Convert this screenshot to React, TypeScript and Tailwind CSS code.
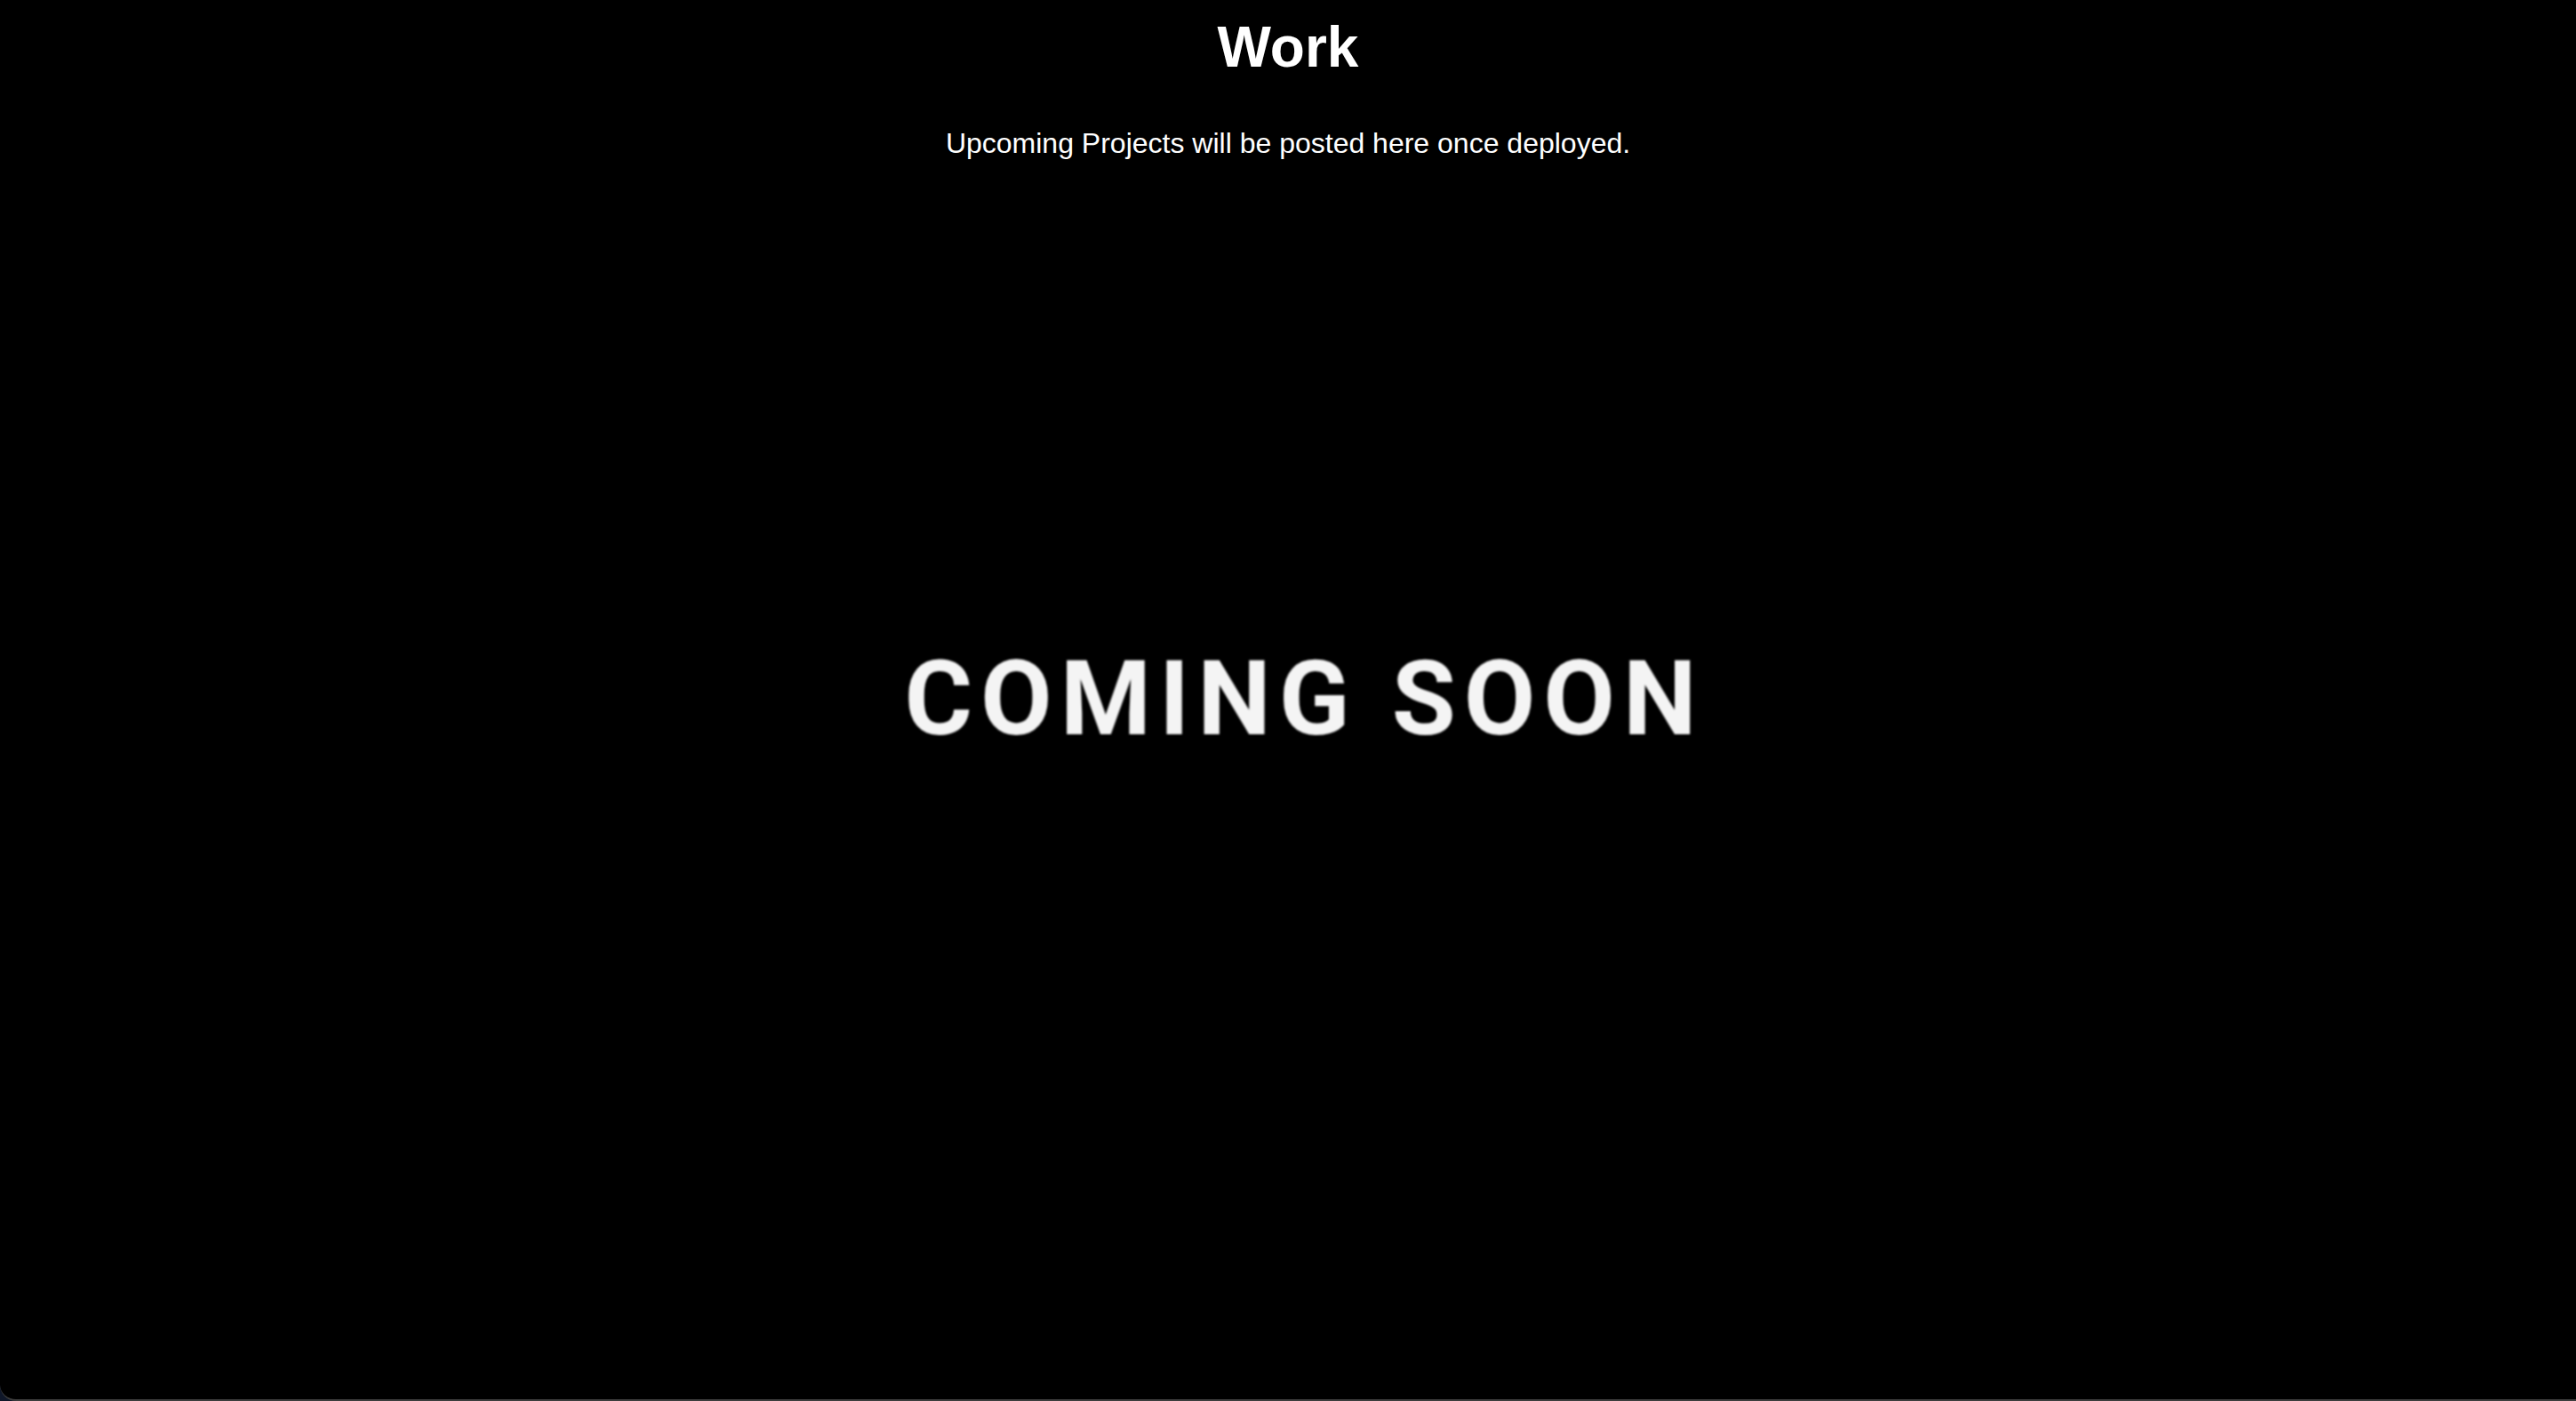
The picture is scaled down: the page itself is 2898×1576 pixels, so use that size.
const Work = () => {
  return (
    <div className="w-full h-[1576px] bg-[#0f1729] font-['Liberation_Sans',Arial,sans-serif]">
      <section className="relative w-full h-full bg-black rounded-bl-[18px] border-b-2 border-[#3d3d3d] overflow-hidden">
        {/* the "coming soon" picture behind the header */}
        <div className="absolute inset-0 flex items-center justify-center">
          <p className="font-['Roboto',sans-serif] font-bold text-[117px] leading-none tracking-[9px] text-[#f4f4f4] blur-[1px] pl-[9px] translate-x-[14px] translate-y-[-1px]">
            COMING SOON
          </p>
        </div>
        <header className="relative flex flex-col items-center text-white">
          <h1 className="mt-[21px] text-[64px] leading-none font-bold">Work</h1>
          <p className="mt-[60px] text-[32px] leading-none">
            Upcoming Projects will be posted here once deployed.
          </p>
        </header>
      </section>
    </div>
  );
};

export default function App() {
  return <Work />;
}
